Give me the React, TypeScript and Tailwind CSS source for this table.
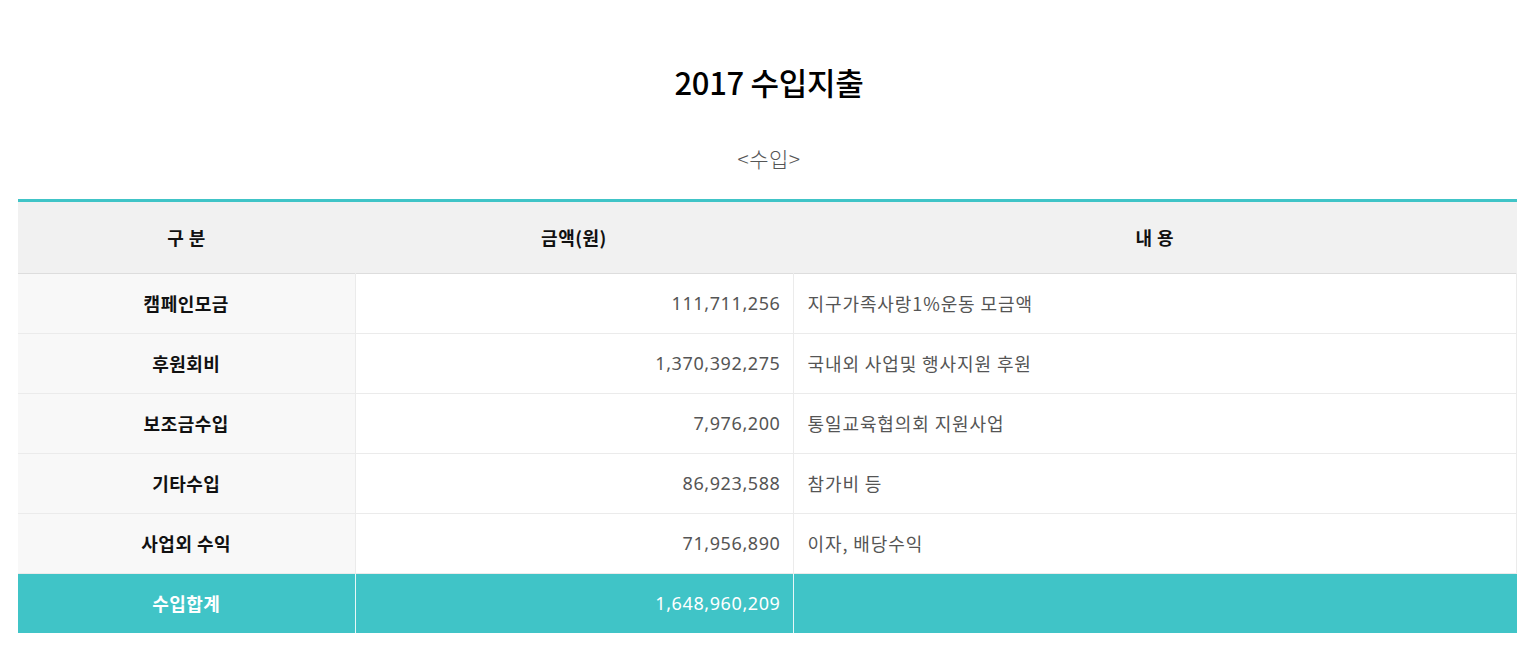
import React from "react";

const rows = [
  { name: "캠페인모금", amount: "111,711,256", desc: "지구가족사랑1%운동 모금액" },
  { name: "후원회비", amount: "1,370,392,275", desc: "국내외 사업및 행사지원 후원" },
  { name: "보조금수입", amount: "7,976,200", desc: "통일교육협의회 지원사업" },
  { name: "기타수입", amount: "86,923,588", desc: "참가비 등" },
  { name: "사업외 수익", amount: "71,956,890", desc: "이자, 배당수익" },
];

const latin = { fontFamily: '"Noto Sans", "Noto Sans CJK KR", sans-serif' };

export default function App() {
  return (
    <div
      className="w-[1538px] h-[656px] bg-white overflow-hidden"
      style={{ fontFamily: '"Noto Sans CJK KR", "Noto Sans", sans-serif' }}
    >
      <div className="pt-[58px] text-center">
        <h1 className="text-[31px] leading-[48px] font-medium text-black tracking-[-0.3px]">2017 수입지출</h1>
        <p className="mt-[37px] text-[21px] leading-[30px] font-light text-[#555] tracking-[0.5px]">&lt;수입&gt;</p>
      </div>
      <div className="ml-[18px] mt-[26px] w-[1499px]">
        <table className="w-full border-collapse border-t-[3px] border-[#40c4c7] table-fixed">
          <colgroup>
            <col className="w-[337px]" />
            <col className="w-[438px]" />
            <col />
          </colgroup>
          <thead>
            <tr className="bg-[#f1f1f1] h-[73px] border-b border-[#dddddd]">
              <th className="text-[18px] font-bold text-[#111] tracking-[0.5px]">구 분</th>
              <th className="text-[18px] font-bold text-[#111] tracking-[0.5px]">금액(원)</th>
              <th className="text-[18px] font-bold text-[#111] tracking-[0.5px]">내 용</th>
            </tr>
          </thead>
          <tbody>
            {rows.map((r) => (
              <tr key={r.name} className="h-[60px] border-b border-[#ebebeb]">
                <td className="bg-[#f8f8f8] text-center text-[18px] font-bold text-[#111] tracking-[0.5px] border-r border-[#ebebeb]">{r.name}</td>
                <td style={latin} className="text-right pr-[12px] text-[18px] font-normal text-[#555] tracking-[0.6px] border-r border-[#ebebeb]">{r.amount}</td>
                <td className="text-left pl-[14px] text-[18px] font-normal text-[#555] tracking-[0.9px] border-r border-[#ebebeb]">{r.desc}</td>
              </tr>
            ))}
            <tr className="h-[59px] bg-[#40c4c7]">
              <td className="text-center text-[18px] font-bold text-white tracking-[0.5px] border-r border-[#e8f7f7]">수입합계</td>
              <td style={latin} className="text-right pr-[12px] text-[18px] font-normal text-white tracking-[0.6px] border-r border-[#e8f7f7]">1,648,960,209</td>
              <td></td>
            </tr>
          </tbody>
        </table>
      </div>
    </div>
  );
}
